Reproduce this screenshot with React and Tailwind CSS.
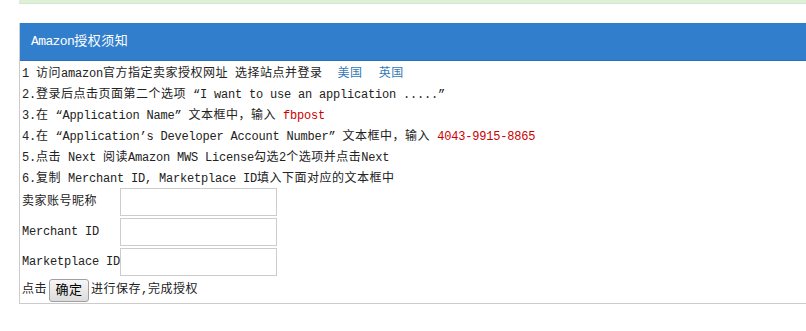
import React from "react";

const font = "font-['Liberation_Mono','Noto_Sans_CJK_SC',monospace]";

// CJK runs get a touch of extra spacing so they sit at ~12.5px per glyph,
// latin runs stay close to 7px like the original page's font.
const CJK = /([\u3000-\u9fff\uff00-\uffef]+)/;
const Txt = ({ children }) =>
  children.split(CJK).map((s, i) =>
    i % 2 ? (
      <span key={i} className="tracking-[0.5px]">
        {s}
      </span>
    ) : (
      s
    )
  );

const Row = ({ label, children }) => (
  <div className="flex items-center h-[30px]">
    <span className="min-w-[98px] shrink-0 whitespace-nowrap">
      <Txt>{label}</Txt>
    </span>
    {children}
  </div>
);

const Field = () => (
  <input
    type="text"
    className="w-[157px] h-[28px] border border-[#cccccc] bg-white outline-none"
  />
);

export default function App() {
  return (
    <div className={`w-[806px] h-[331px] overflow-hidden bg-white ${font} text-[12px] tracking-[-0.2px] text-[#222]`}>
      <div className="ml-[19px] w-[800px]">
        <div className="h-[4px] bg-[#dff0d8] border-b border-[#d3e8c6]" />
        <div className="mt-[19px] border-l border-b border-[#cccccc]">
          <div className="h-[38px] bg-[#317ecc] border-b border-[#2d6fb3] flex items-center pl-[11px] text-white text-[13px] tracking-[-0.6px]">
            <Txt>Amazon授权须知</Txt>
          </div>
          <div className="pt-[3px] pl-[2px] leading-[21px]">
            <p className="whitespace-nowrap">
              <Txt>1 访问amazon官方指定卖家授权网址 选择站点并登录 </Txt>
              <a className="ml-[8px] text-[#337ab7]">
                <Txt>美国</Txt>
              </a>
              <a className="ml-[16px] text-[#337ab7]">
                <Txt>英国</Txt>
              </a>
            </p>
            <p className="whitespace-nowrap">
              <Txt>2.登录后点击页面第二个选项 “I want to use an application .....”</Txt>
            </p>
            <p className="whitespace-nowrap">
              <Txt>3.在 “Application Name” 文本框中，输入 </Txt>
              <span className="text-[#cc0000]">fbpost</span>
            </p>
            <p className="whitespace-nowrap">
              <Txt>4.在 “Application’s Developer Account Number” 文本框中，输入 </Txt>
              <span className="text-[#cc0000]">4043-9915-8865</span>
            </p>
            <p className="whitespace-nowrap">
              <Txt>5.点击 Next 阅读Amazon MWS License勾选2个选项并点击Next</Txt>
            </p>
            <p className="whitespace-nowrap">
              <Txt>6.复制 Merchant ID, Marketplace ID填入下面对应的文本框中</Txt>
            </p>
            <div className="-mt-[3px]">
              <Row label="卖家账号昵称">
                <Field />
              </Row>
              <Row label="Merchant ID">
                <Field />
              </Row>
              <Row label="Marketplace ID">
                <Field />
              </Row>
              <div className="flex items-center h-[26px]">
                <Txt>点击</Txt>
                <button className="mx-[2px] w-[40px] h-[23px] rounded-[3px] border border-[#a0a0a0] bg-gradient-to-b from-[#f6f6f6] to-[#dcdcdc] text-[13px] text-black">
                  <Txt>确定</Txt>
                </button>
                <Txt>进行保存,完成授权</Txt>
              </div>
            </div>
          </div>
        </div>
      </div>
    </div>
  );
}
